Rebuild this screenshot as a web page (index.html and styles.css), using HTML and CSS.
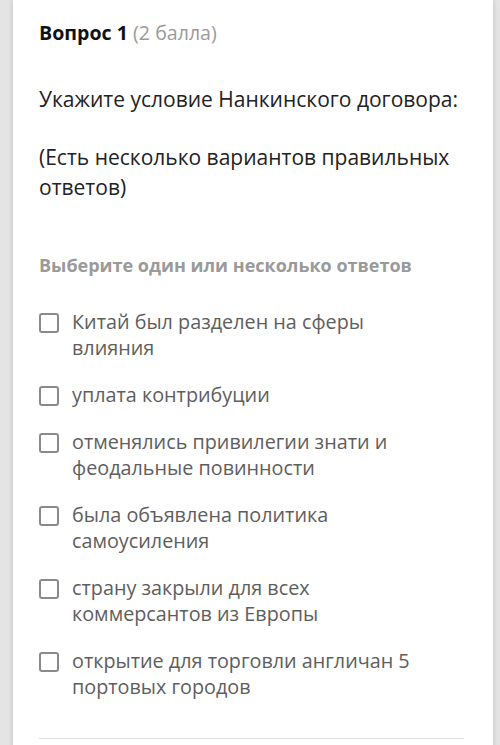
FILE: index.html
```html
<!DOCTYPE html>
<html lang="ru">
<head>
<meta charset="utf-8">
<link rel="stylesheet" href="styles.css">
</head>
<body>
<div class="card">
  <h2 class="qhead"><span class="qnum">Вопрос 1</span> <span class="qpts">(2 балла)</span></h2>
  <p class="qtext">Укажите условие Нанкинского договора:</p>
  <p class="qtext qnote">(Есть несколько вариантов правильных ответов)</p>
  <div class="hint">Выберите один или несколько ответов</div>
  <ul class="opts">
    <li class="opt"><span class="box"></span><span class="lbl">Китай был разделен на сферы влияния</span></li>
    <li class="opt"><span class="box"></span><span class="lbl">уплата контрибуции</span></li>
    <li class="opt"><span class="box"></span><span class="lbl">отменялись привилегии знати и феодальные повинности</span></li>
    <li class="opt"><span class="box"></span><span class="lbl">была объявлена политика самоусиления</span></li>
    <li class="opt"><span class="box"></span><span class="lbl">страну закрыли для всех коммерсантов из Европы</span></li>
    <li class="opt"><span class="box"></span><span class="lbl">открытие для торговли англичан 5 портовых городов</span></li>
  </ul>
  <div class="divider"></div>
</div>
</body>
</html>
```
FILE: styles.css
```css
html, body {
  margin: 0;
  padding: 0;
}
body {
  background: #e4e4e4;
  font-family: "Open Sans", "Noto Sans", sans-serif;
  height: 745px;
  overflow: hidden;
}
.card {
  margin: 0 7px 0 13px;
  background: #fff;
  box-shadow: 0 0 5px rgba(0,0,0,0.18);
  padding: 20px 29px 40px 26px;
  min-height: 800px;
}
.qhead {
  margin: 0;
  font-size: 19.6px;
  line-height: 26px;
  font-weight: 400;
}
.qnum {
  font-weight: 700;
  color: #111;
}
.qpts {
  color: #9a9a9a;
}
.qtext {
  margin: 38px 0 0;
  font-size: 21px;
  line-height: 30px;
  color: #222;
}
.qnote {
  margin-top: 28px;
}
.hint {
  margin-top: 51px;
  font-size: 18px;
  line-height: 24px;
  font-weight: 700;
  color: #9a9a9a;
}
.opts {
  list-style: none;
  margin: 32px 0 0;
  padding: 0;
  display: flex;
  flex-direction: column;
  gap: 21px;
}
.opt {
  display: flex;
  align-items: flex-start;
  gap: 13px;
  padding-right: 32px;
}
.box {
  flex: none;
  width: 16px;
  height: 16px;
  margin-top: 4px;
  margin-left: 0;
  border: 2px solid #8a8a8a;
  border-radius: 3px;
}
.lbl {
  font-size: 19.8px;
  line-height: 26px;
  color: #5e5e5e;
}
.divider {
  margin-top: 38px;
  height: 1px;
  background: #dedede;
}
```
